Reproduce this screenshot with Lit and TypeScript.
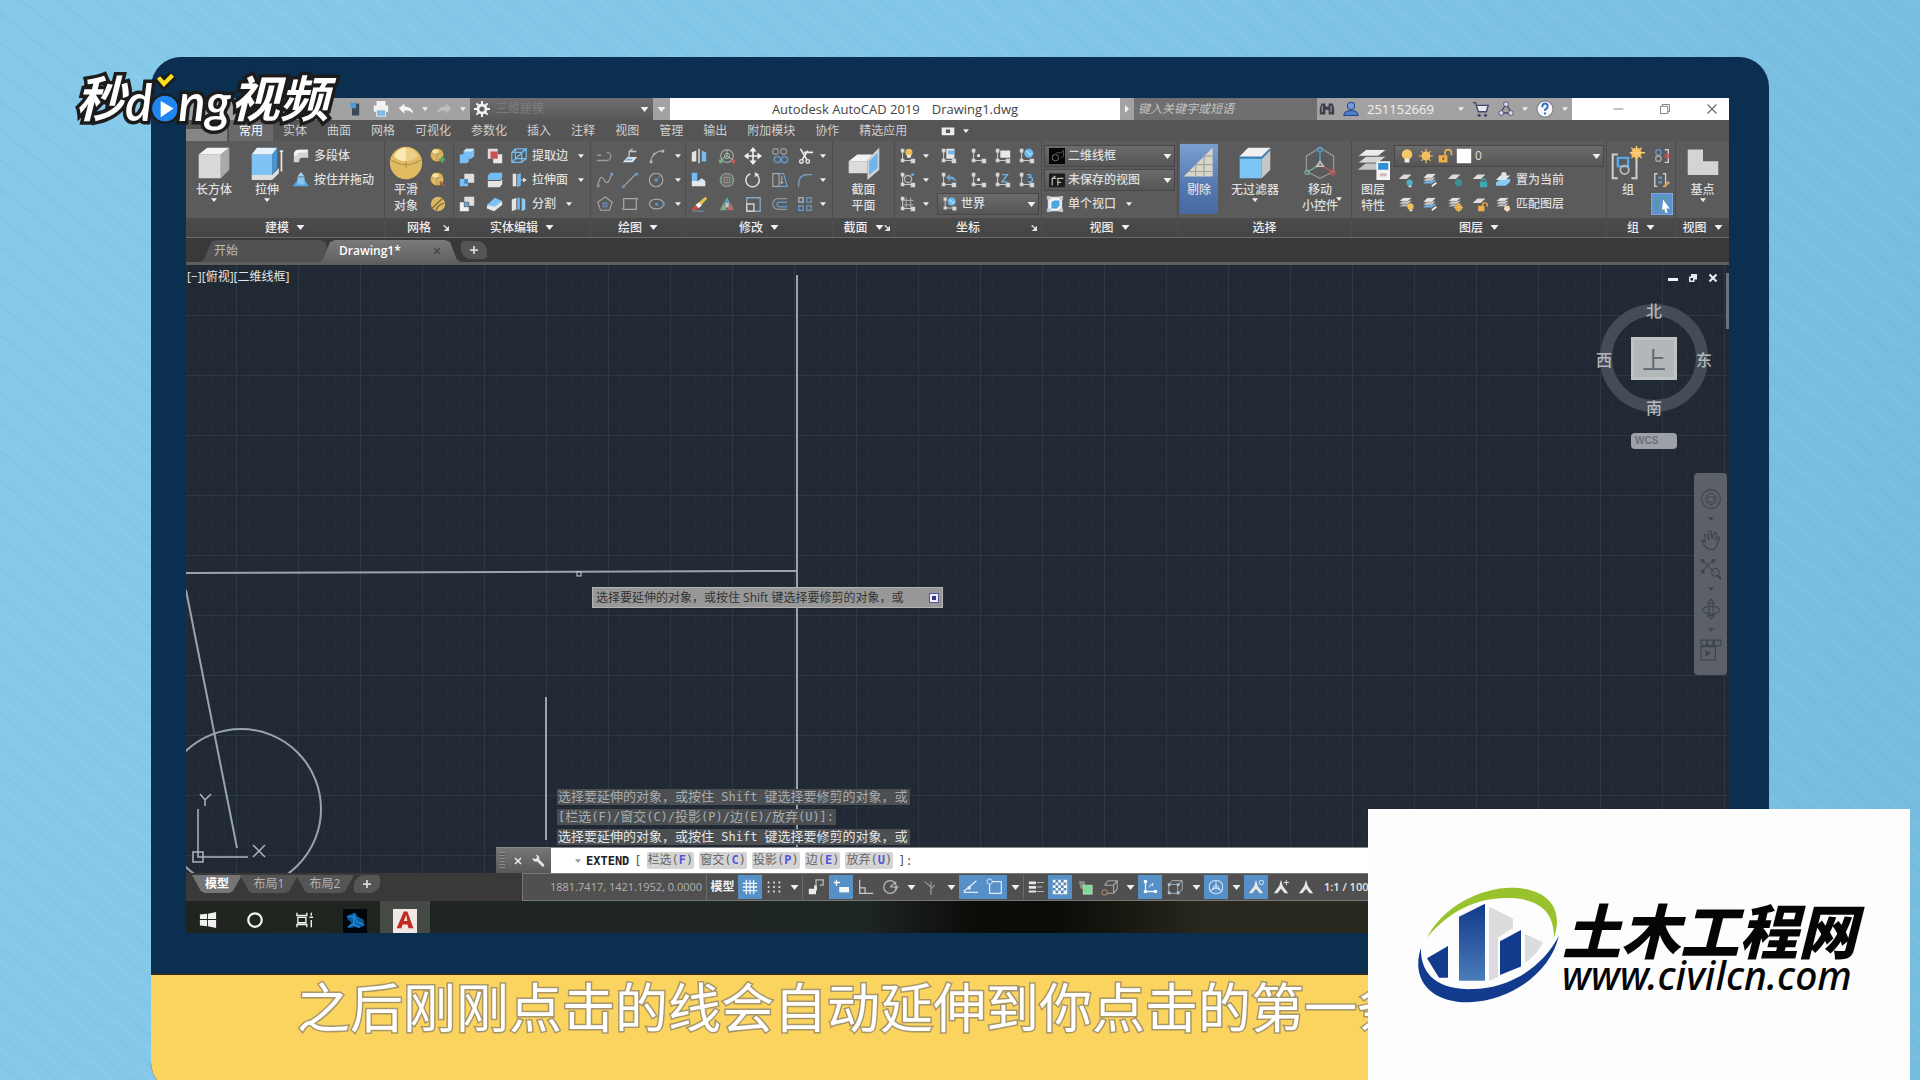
import { LitElement, html, css, svg, nothing, TemplateResult } from "lit";
import { customElement } from "lit/decorators.js";

/* ---------- icon artwork, each drawn on a 20 x 20 grid ---------- */
const axes = svg`<path d="M4 4v11h11" fill="none" stroke="#c9c9c9" stroke-width="1.2"/><path d="M2 2h4v4H2zM2 13h4v4H2zM13 13h5v5h-5z" fill="#d6d6d6"/>`;
const axesW = svg`<path d="M5 5v10h10" fill="none" stroke="#e6f0fa" stroke-width="1.4"/><circle cx="5" cy="4" r="2" fill="#fff"/><circle cx="5" cy="15" r="2" fill="#fff"/><circle cx="16" cy="15" r="2" fill="#fff"/>`;
const layer = svg`<path d="M2 9l5-5h9l-5 5z" fill="#dcdcdc"/>`;
const layers = svg`<path d="M2 13l5-4h10l-5 4z" fill="#bdbdbd" stroke="#4a4a4a" stroke-width=".5"/><path d="M2 10l5-4h10l-5 4z" fill="#cfcfcf" stroke="#4a4a4a" stroke-width=".5"/><path d="M2 7l5-4h10l-5 4z" fill="#e8e8e8" stroke="#4a4a4a" stroke-width=".5"/>`;
const layersBlue = svg`<path d="M2 14l5-4h10l-5 4z" fill="#6fb6ee"/><path d="M2 11l5-4h10l-5 4z" fill="#cfcfcf" stroke="#4a4a4a" stroke-width=".5"/><path d="M2 8l5-5h10l-5 5z" fill="#e8e8e8" stroke="#4a4a4a" stroke-width=".5"/>`;
const ball = svg`<circle cx="9" cy="9" r="7.500" fill="#dcb765" stroke="#6e5a2c" stroke-width=".8"/><path d="M3 6q6 4 12 0M9 2v14" fill="none" stroke="#a4874a" stroke-width=".7"/><ellipse cx="7" cy="5" rx="3.500" ry="2.500" fill="#f5e0a5"/>`;
const man = svg`<path d="M10 2l2 7 6 8h-4l-4-5-4 5H2l6-8z" fill="#e6e6e6"/>`;

const ART: Record<string, TemplateResult> = {
  box: svg`<path d="M1 5h13v14H1z" fill="#d9d9d9"/><path d="M1 5l5-4h13l-5 4z" fill="#f4f4f4"/><path d="M14 5l5-4v13l-5 5z" fill="#a9a9a9"/>`,
  extrude: svg`<path d="M1 17h12v3H1zM13 17l4-4v3l-4 4z" fill="#dedede"/><path d="M1 5h12v12H1z" fill="#7fc3f5"/><path d="M1 5l3-4h12l-3 4z" fill="#e3f2fd"/><path d="M13 5l3-4v12l-3 4z" fill="#4795d3"/><path d="M18.500 3v12M17.500 3h2" stroke="#e5e5e5"/>`,
  polysolid: svg`<path d="M2 9q0-6 6-6h10v9h-7q-3 0-3 4v1H2z" fill="#d2d2d2"/><path d="M2 9q0-6 6-6h10l-3 3H9q-4 0-4 4z" fill="#f5f5f5"/>`,
  press: svg`<path d="M1 17l4-6h10l4 6z" fill="#5aa3dc"/><path d="M6 7h8v8H6z" fill="#86c6f3"/><path d="M10 1l4 5H6z" fill="#9ed2f7"/>`,
  sphere: svg`<circle cx="10" cy="10" r="9.500" fill="#e0bb62"/><path d="M1 8q9 6 18 0M10 1v12" fill="none" stroke="#a68a48" stroke-width=".6"/><path d="M3 6Q5 1 10 1v8Q5 9 3 6z" fill="#f8e8b4"/><path d="M10 1q5 0 7 5-2 3-7 3z" fill="#eccf86"/>`,
  ballPlus: svg`${ball}<path d="M11 14h7M14.500 10.500v7" stroke="#55a867" stroke-width="2.500"/>`,
  ballMinus: svg`${ball}<path d="M12 12l5 5" stroke="#a85b4a" stroke-width="2.500"/>`,
  ballLine: svg`<circle cx="10" cy="10" r="8" fill="#d9b766"/><path d="M3 15L15 4M8 17q1-6 9-8" fill="none" stroke="#7c6834" stroke-width="1.500"/>`,
  union: svg`<path d="M2 8h4V5l3-3h9v8l-3 3h-3v3l-2 2H2z" fill="#79bff3"/><path d="M6 5l3-3h9l-3 3z" fill="#cfe8fb"/>`,
  subtract: svg`<path d="M2 2h11v11H2z" fill="#e4dada"/><path d="M8 8h10v10H8z" fill="#efe6e6"/><path d="M5 5h8v8H5z" fill="#c65252"/>`,
  wire: svg`<path d="M2 6h11v11H2zM2 6l4-4h12l-5 4M18 2v11l-5 4M2 17L18 2M6 2v11h12" fill="none" stroke="#73bdf3" stroke-width="1.300"/>`,
  interfere: svg`<path d="M7 3h10l1 1v9H7z" fill="#dedede"/><path d="M2 9h9v8H2z" fill="#79bff3"/><path d="M7 9h4v5H7z" fill="#4287c3"/>`,
  slab: svg`<path d="M2 5l3-3h13v5l-2 3H2z" fill="#74bbf0"/><path d="M2 11h14l2-2v6l-3 3H2z" fill="#e6e6e6"/>`,
  face: svg`<path d="M3 3h4v14H3z" fill="#e1e1e1"/><path d="M8 4l4-2v14l-4 2z" fill="#6fb8ef"/><path d="M12 10h5M15 8l3 2-3 2z" stroke="#ddd" fill="#ddd"/>`,
  intersect: svg`<path d="M7 2h11v10H7z" fill="#dedede"/><path d="M2 8h10v10H2z" fill="#efefef"/><path d="M7 8h5v5H7z" fill="#5fa9e3" stroke="#333" stroke-width=".6"/>`,
  fillet3: svg`<path d="M1 12l9-8 8 3v4l-9 7-8-3z" fill="#e7e7e7"/><path d="M1 11l9-8 8 4-8 6z" fill="#7dc0f2"/>`,
  split: svg`<path d="M2 5l5-2v13l-5 2z" fill="#e3e3e3"/><path d="M8 3h3v13H8z" fill="#6fb8ef"/><path d="M13 3l4 2v11l-4 2z" fill="#8ccaf6"/>`,
  pline: svg`<path d="M1 15h11a4 4 0 0 0 0-9M1 9h5" fill="none" stroke="#9a9fa6" stroke-width="1.400"/>`,
  plane: svg`<path d="M2 17l5-6h11l-5 6z" fill="#e0e6ea"/><path d="M9 13V5h8M9 5l4-3" stroke="#bfc7ce" fill="none" stroke-width="1.400"/><path d="M6 13h7l-1 2H5z" fill="#6ba9d9"/>`,
  arc: svg`<path d="M3 17Q4 5 17 4" fill="none" stroke="#a9a9a9" stroke-width="1.200"/><path d="M2 15h3v3H2zM6 7h2v2H6zM15 3h3v3h-3z" fill="#aeb8c4"/>`,
  spline: svg`<path d="M2 16Q5 2 9 10T17 4" fill="none" stroke="#9fa6ae" stroke-width="1.300"/><path d="M1 15h3v3H1zM16 2h3v3h-3z" fill="#7f9dbd"/>`,
  line: svg`<path d="M3 17L17 3" stroke="#a8adb3" stroke-width="1.200"/><path d="M1 16h3v3H1zM16 2h3v3h-3z" fill="#6d99c4"/>`,
  circle: svg`<circle cx="9" cy="10" r="7.500" fill="none" stroke="#a9a9a9" stroke-width="1.300"/><path d="M9 10l6-6" stroke="#6d99c4"/><circle cx="9" cy="10" r="2" fill="#5f94c8"/>`,
  polygon: svg`<path d="M10 2l8 6-3 9H5L2 8z" fill="none" stroke="#a9a9a9" stroke-width="1.200"/><path d="M8 9h4v4H8z" fill="none" stroke="#6d99c4" stroke-width="1.200"/>`,
  rect: svg`<path d="M3 4h14v12H3z" fill="none" stroke="#a9a9a9" stroke-width="1.300"/><path d="M1 14h3v3H1zM16 3h3v3h-3z" fill="#7c97b4"/>`,
  ellipse: svg`<ellipse cx="9.500" cy="10" rx="8" ry="5.500" fill="none" stroke="#a9a9a9" stroke-width="1.300"/><path d="M8 9h3v3H8zM16 9h3v3h-3z" fill="#5f94c8"/>`,
  mirror: svg`<path d="M2 6l5-2v12H2z" fill="#e3e3e3"/><path d="M10 2v16" stroke="#e8e8e8" stroke-width="1.500"/><path d="M13 4l5 2v10h-5z" fill="#74bbf0"/>`,
  gizmoRot: svg`<circle cx="10" cy="10" r="7" fill="none" stroke="#98a39b" stroke-width="1.500"/><path d="M10 4v6l-6 4M10 10l6 4" stroke="#8ec6a4" fill="none" stroke-width="1.200"/><path d="M1 14h4v4H1z" fill="#6fae87"/><path d="M15 14h4v4h-4z" fill="#b3605c"/><circle cx="10" cy="10" r="3" fill="none" stroke="#b2b2b2"/>`,
  move: svg`<path d="M10 0l4 5H6zM10 20l4-5H6zM0 10l5-4v8zM20 10l-5-4v8z" fill="#f0f0f0"/><path d="M10 4v12M4 10h12" stroke="#f0f0f0" stroke-width="1.800"/>`,
  copy: svg`<circle cx="5" cy="5" r="3.200" fill="none" stroke="#9f9f9f" stroke-width="1.200"/><circle cx="14" cy="5" r="3.200" fill="none" stroke="#9f9f9f" stroke-width="1.200"/><circle cx="7" cy="14" r="3.500" fill="none" stroke="#5f94c8" stroke-width="1.700"/><circle cx="15" cy="14" r="3.500" fill="none" stroke="#5f94c8" stroke-width="1.700"/>`,
  trim: svg`<path d="M5 2l7 12M13 4L7 14M9 6h10" stroke="#ececec" stroke-width="1.800" fill="none"/><circle cx="6" cy="16" r="2" fill="none" stroke="#ececec" stroke-width="1.500"/><circle cx="13" cy="16" r="2" fill="none" stroke="#ececec" stroke-width="1.500"/>`,
  align: svg`<path d="M2 2h6v9H2z" fill="#74bbf0"/><path d="M2 11h15v6H2z" fill="#e8e8e8"/><path d="M6 13l7-5 4 3z" fill="#cfe6f8"/>`,
  rot3: svg`<circle cx="10" cy="10" r="7.500" fill="none" stroke="#8d9c94" stroke-width="1.300"/><ellipse cx="10" cy="10" rx="3" ry="7.500" fill="none" stroke="#b67f74"/><ellipse cx="10" cy="10" rx="7.500" ry="3" fill="none" stroke="#7aa988"/><path d="M10 2v16M2 10h16" stroke="#9a9a9a" stroke-width=".7"/>`,
  rotate: svg`<path d="M14 4a7.500 7.500 0 1 1-7-1" fill="none" stroke="#dcdcdc" stroke-width="1.700"/><path d="M12 1l5 3-5 3z" fill="#dcdcdc"/>`,
  stretch: svg`<path d="M2 3h7v14H2z" fill="none" stroke="#a9a9a9" stroke-width="1.300"/><path d="M9 3h5l4 14h-9" fill="none" stroke="#6da1d0" stroke-width="1.300"/><path d="M12 6v8l-2-2M12 14l2-2" stroke="#c9c9c9" fill="none"/>`,
  fillet: svg`<path d="M3 18v-4Q3 4 13 4h5" fill="none" stroke="#8e9aa6" stroke-width="1.400"/><path d="M3 14Q3 4 13 4" fill="none" stroke="#6b98c4" stroke-width="1.400"/>`,
  erase: svg`<path d="M9 9l8-7 2 2-7 8z" fill="#e8c24e"/><path d="M6 11l4-3 3 4-4 3z" fill="#f4f4f4"/><path d="M1 17l5-6 4 4-5 2z" fill="#c2513f"/><path d="M3 18h12" stroke="#7a9fc2"/>`,
  scale3: svg`<path d="M10 2l4 8H6z" fill="#5c9fb5"/><path d="M6 9l-4 8h8z" fill="#7fa98b"/><path d="M14 9l4 8h-8z" fill="#b76d66"/><path d="M8 9h4v5H8z" fill="#c3c3c3"/>`,
  scale: svg`<path d="M3 3h15v15H3z" fill="none" stroke="#8aa5bf" stroke-width="1.500"/><path d="M3 10h8v8H3z" fill="none" stroke="#d0d0d0" stroke-width="1.600"/>`,
  offset: svg`<path d="M18 4H8a6 6 0 0 0 0 12h10" fill="none" stroke="#8b97a3" stroke-width="1.400"/><path d="M18 8H9a2.500 2.500 0 0 0 0 5h9" fill="none" stroke="#5f94c8" stroke-width="1.500"/>`,
  array: svg`<path d="M3 3h5v5H3zM12 3h5v5h-5zM3 12h5v5H3zM12 12h5v5h-5z" fill="none" stroke="#6b98c4" stroke-width="1.400"/><path d="M3 3h5v5H3z" fill="none" stroke="#a9a9a9" stroke-width="1.400"/>`,
  section: svg`<path d="M1 9h11v7H1z" fill="#dcdcdc"/><path d="M1 9l5-4h9l-3 4z" fill="#f2f2f2"/><path d="M12 8l7-7v13l-7 6z" fill="#cfd3d6"/><path d="M13 9l5-5v9l-5 4z" fill="#6cb5ee"/>`,
  ucsBulb: svg`${axes}<circle cx="11" cy="6" r="4" fill="#efbd5e"/><path d="M9 9h4v3H9z" fill="#f4f4f4"/>`,
  ucsGear: svg`${axes}<circle cx="10" cy="9" r="4" fill="none" stroke="#b5b5b5" stroke-width="1.500"/><circle cx="15" cy="4" r="1.500" fill="#6fb8ef"/>`,
  ucsHash: svg`${axes}<path d="M8 3v11M13 3v11M5 6h11M5 11h11" stroke="#b5b5b5"/>`,
  ucsDoc: svg`${axes}<path d="M7 2h9v11H7z" fill="#e6e6e6"/><path d="M9 4h7v4H9z" fill="#6cb5ee"/>`,
  ucsDot: svg`${axes}<path d="M8 8h3v3H8z" fill="#ededed"/>`,
  ucsView: svg`${axes}<path d="M7 4h11v8H7z" fill="#e8e8e8"/>`,
  ucsGlobe: svg`${axes}<circle cx="12" cy="7" r="5" fill="#6cb8f0"/><path d="M9 5l3 1 1 3 3-2" stroke="#d9effc" fill="none"/>`,
  ucsBack: svg`${axes}<path d="M7 7l4-4v3q6 0 7 6-3-3-7-3v3z" fill="#65a8dd"/>`,
  ucsZ: svg`${axes}<path d="M9 4h6l-6 8h6" fill="none" stroke="#6cb5ee" stroke-width="1.500"/>`,
  ucs3: svg`${axes}<path d="M10 4h4v3h-3 3q2 0 2 3t-5 2" fill="none" stroke="#6cb5ee" stroke-width="1.500"/>`,
  visWire: svg`<path d="M0 0h20v20H0z" fill="#060606"/><circle cx="8" cy="12" r="4" fill="none" stroke="#8c8c8c"/><path d="M9 6h6l3-3v7l-3 3" fill="none" stroke="#6a6a6a"/>`,
  viewF: svg`<path d="M0 2h20v17H0z" fill="#1b1b1b"/><path d="M4 17V8h5M11 17v-4h4M11 13V8h7M4 8l4-3" fill="none" stroke="#bdbdbd" stroke-width="1.500"/>`,
  viewport: svg`<path d="M3 3h14v14H3z" fill="#f2f2f2" stroke="#d8e6f0" stroke-width="2"/><path d="M1 1h4v4H1zM15 1h4v4h-4zM1 15h4v4H1zM15 15h4v4h-4z" fill="#c5c5c5"/><path d="M6 8l3-2h6v6l-3 3H6z" fill="#4aa8df"/>`,
  cull: svg`<path d="M1 18L18 1v17z" fill="#d9d5ca"/><path d="M4 15h14M8 11h10M13 6h5M8 11v7M13 6v12" stroke="#a6a294" stroke-width=".7"/>`,
  filter: svg`<path d="M1 6h13v13H1z" fill="#7dc5f7"/><path d="M1 6l5-5h13l-5 5z" fill="#f0f0f0"/><path d="M14 6l5-5v13l-5 5z" fill="#c6c6c6"/><path d="M1 7h13l5-5" fill="none" stroke="#3c7fb4"/>`,
  gizmo: svg`<path d="M10 1l8 5v9l-8 4-8-4V6z" fill="none" stroke="#9a9a9a" stroke-width=".7"/><path d="M10 3v8" stroke="#4e9fd0" stroke-width=".8"/><path d="M10 11l-7 4" stroke="#69b490" stroke-width=".8"/><path d="M10 11l7 4" stroke="#c05a54" stroke-width=".8"/><circle cx="10" cy="2" r="1.300" fill="none" stroke="#4e9fd0" stroke-width=".8"/><circle cx="2.500" cy="15.500" r="1.300" fill="none" stroke="#69b490" stroke-width=".8"/><circle cx="17.500" cy="15.500" r="1.300" fill="none" stroke="#c05a54" stroke-width=".8"/><path d="M8 12l2-3 2 3z" fill="none" stroke="#c9c9c9" stroke-width=".8"/>`,
  layerProps: svg`<path d="M1 14l5-4h12l-5 4z" fill="#c4c4c4"/><path d="M1 10l5-4h12l-5 4z" fill="#d6d6d6" stroke="#555" stroke-width=".5"/><path d="M1 6l5-4h12l-5 4z" fill="#ececec" stroke="#555" stroke-width=".5"/><path d="M12 9h8v11h-8z" fill="#f4f4f4"/><path d="M13 10h6v4h-6z" fill="#2f8fd6"/><path d="M14 16h4v2h-4z" fill="#d8b9b9"/>`,
  bulb: svg`<circle cx="10" cy="8" r="6.500" fill="#f7c867"/><path d="M7 13h6v5H7z" fill="#eee"/>`,
  sun: svg`<circle cx="10" cy="10" r="5.500" fill="#f7c867"/><path d="M10 1v18M1 10h18M4 4l12 12M16 4L4 16" stroke="#f0b955" stroke-width="1.500"/>`,
  unlock: svg`<path d="M2 9h11v9H2z" fill="#eeb04e"/><path d="M10 9V6q0-4 4-4t4 4v3" fill="none" stroke="#eeb04e" stroke-width="2"/><path d="M7 12h2v3H7z" fill="#7a5620"/>`,
  swatch: svg`<path d="M1 1h18v18H1z" fill="#fff"/>`,
  lyBulb: svg`${layer}<circle cx="14" cy="13" r="3.500" fill="#4cb3c4"/><path d="M13 16h3v2h-3z" fill="#e6e6e6"/>`,
  lyBlue: svg`${layersBlue}<path d="M12 17l5-4" stroke="#f0f0f0" stroke-width="2"/>`,
  lyFreeze: svg`${layer}<circle cx="14" cy="13" r="4" fill="#3d8f92"/>`,
  lyLock: svg`${layer}<path d="M10 12h8v6h-8z" fill="#3cabb6"/><path d="M12 12v-2q2-3 4 0v2" fill="none" stroke="#3cabb6" stroke-width="1.500"/>`,
  lyCur: svg`<path d="M2 16l5-4h11l-5 4z" fill="#6db9ef"/><path d="M2 13l5-4h11v3l-5 4H2z" fill="#8cc9f4"/><path d="M2 10l5-5h11l-5 5z" fill="#d9e7f0"/><circle cx="11" cy="4" r="3" fill="#e2e2e2"/>`,
  lyOn: svg`${layers}<circle cx="15" cy="13" r="3.500" fill="#f5bf58"/><path d="M14 16h3v2h-3z" fill="#e6e6e6"/>`,
  lySun: svg`${layers}<circle cx="14" cy="14" r="4" fill="#dba94b"/><path d="M14 9v10M9 14h10" stroke="#f3c063"/>`,
  lyUnlock: svg`${layer}<path d="M8 12h7v6H8z" fill="#eeb04e"/><path d="M13 12v-2q2-3 5 0v3" fill="none" stroke="#eeb04e" stroke-width="1.500"/>`,
  lyMatch: svg`${layers}<path d="M12 12h5l1 4-3 3-4-3z" fill="#f0dfb5"/>`,
  group: svg`<path d="M4 5H1v14h3M12 19h3V5h-3" fill="none" stroke="#cfcfcf" stroke-width="1.200"/><path d="M4 7h6v5H4z" fill="none" stroke="#5aa7e4" stroke-width="1.400"/><circle cx="8" cy="14" r="2.500" fill="none" stroke="#bbb"/><circle cx="15" cy="4" r="3" fill="#f4b94f"/><path d="M15 0v9M11 4h9M12 1l6 6M18 1l-6 6" stroke="#f7cc78" stroke-width=".8"/>`,
  ungroup: svg`<path d="M13 3h4v14h-4" fill="none" stroke="#cfcfcf" stroke-width="1.500"/><circle cx="6" cy="6" r="3" fill="none" stroke="#5f94c8" stroke-width="1.500"/><circle cx="6" cy="13" r="3" fill="none" stroke="#a9a9a9" stroke-width="1.500"/><path d="M13 8l5 4M18 8l-5 4" stroke="#d34e4e" stroke-width="1.700"/>`,
  groupEdit: svg`<path d="M5 3H2v14h3M11 17h3V3h-3" fill="none" stroke="#cfcfcf" stroke-width="1.500"/><path d="M6 6h4v3H6zM6 11h4v3H6z" fill="#5f94c8"/><path d="M11 17l6-6 2 2-6 5z" fill="#e09e5a"/>`,
  groupSel: svg`<path d="M0 0h20v20H0z" fill="#5f92cf" stroke="#93b5df"/><path d="M5 4v12M9 4h3v12H9" stroke="#52a08a" stroke-width="2" fill="none"/><path d="M11 6l6 8h-3l1 4-2 0-1-4-2 2z" fill="#fff"/>`,
  base: svg`<path d="M1 2h9v7h9v8H1z" fill="#d4d4d4"/>`,
  phone: svg`<path d="M5 3h9v15H5z" fill="#3f4a55"/><path d="M3 2h7v7H3z" fill="#4d9bd3"/>`,
  folder: svg`<path d="M2 12h6v5H2z" fill="#e9a945"/>`,
  printer: svg`<path d="M5 1h10v5H5zM2 6h16v7H2z" fill="#f3f3f3"/><path d="M5 11h10v7H5z" fill="#7dbce8" stroke="#eee"/>`,
  undo: svg`<path d="M1 9l7-6v4q10 0 11 9-4-5-11-4v4z" fill="#f5f5f5"/>`,
  redo: svg`<path d="M19 9l-7-6v4Q2 7 1 16q4-5 11-4v4z" fill="#bdbdbd"/>`,
  gear: svg`<circle cx="10" cy="10" r="5" fill="none" stroke="#f2f2f2" stroke-width="3.500"/><path d="M10 0v4M10 16v4M0 10h4M16 10h4M3 3l3 3M14 14l3 3M17 3l-3 3M3 17l3-3" stroke="#f2f2f2" stroke-width="2.500"/>`,
  binoc: svg`<path d="M3 3h5v14H1V9zM12 3h5l2 6v8h-7zM8 7h4v4H8z" fill="#3a3f47"/><path d="M4 6v8M15 6v8" stroke="#c7c7c7"/>`,
  user: svg`<circle cx="10" cy="6" r="4.500" fill="#6f9cdc" stroke="#27468d" stroke-width="1.300"/><path d="M1 18q1-6 9-6t9 6z" fill="#4f7fc9" stroke="#27468d" stroke-width="1.300"/>`,
  cart: svg`<path d="M1 3h3l3 10h9l2-7H6" fill="#e8e8ee" stroke="#44496b" stroke-width="1.600"/><circle cx="8" cy="17" r="1.800" fill="#44496b"/><circle cx="15" cy="17" r="1.800" fill="#44496b"/>`,
  share: svg`<path d="M10 4l7 11H3z" fill="none" stroke="#44496b" stroke-width="1.700"/><circle cx="10" cy="4" r="3" fill="#d5d9e8" stroke="#44496b"/><circle cx="4" cy="15" r="3" fill="#d5d9e8" stroke="#44496b"/><circle cx="16" cy="15" r="3" fill="#d5d9e8" stroke="#44496b"/>`,
  help: svg`<circle cx="10" cy="10" r="9" fill="#f7f7f7" stroke="#7f8893" stroke-width="1.500"/><path d="M7 8q0-4 3-4t3 3q0 2-3 4v1M10 14v2" fill="none" stroke="#3371c0" stroke-width="2.200"/>`,
  winMin: svg`<path d="M5 10h11" stroke="#777"/>`,
  winMax: svg`<path d="M5 7h8v8H5z" fill="none" stroke="#777"/><path d="M7 7V5h8v8h-2" fill="none" stroke="#777"/>`,
  winX: svg`<path d="M5 5l10 10M15 5L5 15" stroke="#666" stroke-width="1.200"/>`,
  cam: svg`<path d="M1 5h18v11H1z" fill="#ececec"/><path d="M7 8h6v5H7z" fill="#555"/>`,
  grid: svg`<path d="M6 2v16M10 2v16M14 2v16M2 6h16M2 10h16M2 14h16" stroke="#f2f7fc" stroke-width="1.400"/>`,
  dots: svg`<path d="M3 4h2v2H3zM9 4h2v2H9zM15 4h2v2h-2zM3 9h2v2H3zM9 9h2v2H9zM15 9h2v2h-2zM3 14h2v2H3zM9 14h2v2H9zM15 14h2v2h-2z" fill="#d6d6d6"/>`,
  snap: svg`<path d="M2 12h8v6H2zM8 8h3v6H8z" fill="#ececec"/><path d="M10 8V2h8v6h-4" fill="none" stroke="#b9b9b9" stroke-width="1.400"/>`,
  dyn: svg`<path d="M5 2v7M2 5h7" stroke="#fff" stroke-width="1.400"/><path d="M8 10h11v6H8z" fill="#f6f6f6"/>`,
  ortho: svg`<path d="M3 2v15h15M3 11h6v6" fill="none" stroke="#c9c9c9" stroke-width="1.400"/>`,
  polar: svg`<circle cx="9" cy="10" r="7" fill="none" stroke="#b9b9b9" stroke-width="1.400"/><path d="M9 10h10M9 10l7-6M14 10l3 3" stroke="#b9b9b9" fill="none" stroke-width="1.300"/>`,
  iso: svg`<path d="M10 8v11M10 10L3 4M10 12l4-4" stroke="#9b9b9b" stroke-width="1.300"/><path d="M9 4h2v4H9z" fill="#71875e"/>`,
  track: svg`<path d="M2 15L16 3M2 16h16" stroke="#dceafa" stroke-width="1.500" fill="none"/><circle cx="8" cy="11" r="2" fill="#dceafa"/>`,
  osnap: svg`<path d="M4 4h13v13H4z" fill="none" stroke="#dceafa" stroke-width="1.300"/><circle cx="4" cy="4" r="3" fill="#5b93c8" stroke="#dceafa"/>`,
  lw: svg`<path d="M2 4h8v3H2zM2 9h8v3H2zM2 14h8v2H2z" fill="#e6e6e6"/><path d="M11 5h8M11 10h6M11 15h8" stroke="#bdbdbd"/>`,
  trans: svg`<path d="M2 2h16v16H2z" fill="#f3f8fc"/><path d="M5 2h3v3H5zM11 2h3v3h-3zM2 5h3v3H2zM8 5h3v3H8zM14 5h3v3h-3zM5 8h3v3H5zM11 8h3v3h-3zM2 11h3v3H2zM8 11h3v3H8zM14 11h3v3h-3zM5 14h3v3H5zM11 14h3v3h-3z" fill="#5786b3"/>`,
  cycle: svg`<path d="M3 3l7 1v8H5z" fill="#83917f"/><path d="M8 8h10v10H8z" fill="#7fd897" stroke="#e8f7ea" stroke-width=".6"/>`,
  osnap3: svg`<path d="M4 8h10v9H4M4 8l4-5h10l-4 5M18 3v9l-4 5" fill="none" stroke="#a9a9a9" stroke-width="1.200"/><circle cx="4" cy="16" r="3" fill="#4d4d4d" stroke="#c79d74"/>`,
  ducs: svg`${axesW}<path d="M9 10l4-4M13 6v3" stroke="#fff" fill="none"/>`,
  selfil: svg`<path d="M3 7h10v10H3zM3 7l4-4h11l-5 4M18 3v10l-5 4" fill="none" stroke="#b9b9b9"/><path d="M2 6h3v3H2zM12 6h3v3h-3zM2 15h3v3H2zM12 15h3v3h-3z" fill="#a8cbe3"/>`,
  gizS: svg`<circle cx="10" cy="10" r="7.500" fill="none" stroke="#cfe0f2" stroke-width="1.200"/><path d="M10 2v8l-7 5M10 10l7 5M6 12q4-8 8 0z" fill="none" stroke="#dceafa"/>`,
  annoA: svg`${man}<circle cx="16" cy="5" r="2.500" fill="none" stroke="#e6f0fa"/>`,
  annoB: svg`${man}<path d="M16 2v6M13 5h6" stroke="#e6e6e6"/>`,
  annoC: svg`${man}`,
  wrench: svg`<path d="M17 16L9 8" stroke="#e6e6e6" stroke-width="4" stroke-linecap="round"/><path d="M2 6a5 5 0 0 0 9 3 5 5 0 0 0-4-8l2 4-2 2z" fill="#e6e6e6"/>`,
  x: svg`<path d="M4 4l12 12M16 4L4 16" stroke="#ededed" stroke-width="3"/>`,
  xs: svg`<path d="M3 3l14 14M17 3L3 17" stroke="#3c3c3c" stroke-width="3"/>`,
  plus: svg`<path d="M10 2v16M2 10h16" stroke="#d8d8d8" stroke-width="3.500"/>`,
  dMin: svg`<path d="M0 10h20v6H0z" fill="#eef2f5"/>`,
  dMax: svg`<path d="M2 7h11v11H2zM6 2h12v11h-5V7H6z" fill="#e6eaee"/><path d="M5 10h5v5H5z" fill="#222b33"/>`,
  dX: svg`<path d="M3 3l14 14M17 3L3 17" stroke="#eef2f5" stroke-width="4"/>`,
  wheel: svg`<circle cx="10" cy="10" r="8.500" fill="none" stroke="#3d444d"/><circle cx="10" cy="10" r="5" fill="none" stroke="#3d444d" stroke-width=".8"/><path d="M7 8h6v5H7z" fill="none" stroke="#3d444d" stroke-width=".8"/>`,
  hand: svg`<path d="M7 18q-5-4-5-8l3 2-1-7 2 0 2 5V2h2l1 7 2-6 2 1-1 6 3-3 1 1-3 7q-1 3-3 4z" fill="none" stroke="#3d444d"/>`,
  zoomx: svg`<path d="M2 2l11 11M12 2L2 12" stroke="#3d444d"/><path d="M1 1h3v3H1zM11 1h3v3h-3zM1 11h3v3H1z" fill="#3d444d"/><circle cx="14" cy="13" r="3.500" fill="none" stroke="#3d444d"/><path d="M16 16l3 3" stroke="#3d444d" stroke-width="2"/>`,
  orbit: svg`<ellipse cx="10" cy="11" rx="8" ry="3.500" fill="none" stroke="#3d444d"/><path d="M8 5h4v11H8zM10 1l3 4H7zM10 19l3-3H7z" fill="none" stroke="#3d444d"/>`,
  motion: svg`<path d="M1 1h5v5H1zM7 1h5v5H7zM13 1h6v5h-6zM1 7h13v12H1z" fill="none" stroke="#3d444d"/><path d="M5 10l5 3-5 3z" fill="#3d444d"/>`,
  win: svg`<path d="M1 4l8-1v6H1zM10 3l9-2v8h-9zM1 10h8v7l-8-1zM10 10h9v9l-9-2z" fill="#f1f1f1"/>`,
  ring: svg`<circle cx="10" cy="10" r="7.500" fill="none" stroke="#f1f1f1" stroke-width="2.500"/>`,
  task: svg`<path d="M1 2v3h11V2M1 18v-3h11v3M2 7h9v6H2z" fill="none" stroke="#f1f1f1" stroke-width="1.500"/><path d="M17 2v3M17 10v8M15 7h4" stroke="#f1f1f1" stroke-width="1.600"/>`,
  bird: svg`<path d="M0 0h20v20H0z" fill="#020509"/><path d="M3 6l7-3 2 3 5 3 1 5-5 2-3-1-6 1 3-5-3-2z" fill="#0c5c9c"/><path d="M4 6l6 1 2 4 5 2M4 15l6-3M9 4v9l5 2" stroke="#1b8ee0" fill="none"/>`,
  acad: svg`<path d="M0 0h20v20H0z" fill="#f1e7e4"/><path d="M3 16L9 2h3l5 14h-4l-1-3H8l-1 3zM9 10h3l-1-5z" fill="#c32b22" fill-rule="evenodd"/>`,
};

const icon = (name: string, cls = "i20") =>
  html`<svg class=${cls} viewBox="0 0 20 20" aria-hidden="true">${ART[name]}</svg>`;
const caret = (cls = "") =>
  html`<svg class="caret ${cls}" viewBox="0 0 8 5" aria-hidden="true"><path d="M0 0h8L4 5z" fill="currentColor" /></svg>`;
const ib = (name: string, label: string, cls = "") =>
  html`<button class="ib ${cls}" aria-label=${label}>${icon(name, "i18")}</button>`;
const more = (label: string) => html`<button class="ib" aria-label=${label}>${caret("s")}</button>`;
const row = (name: string, label: string, drop = false) =>
  html`<button class="rowb">${icon(name, "i18")}<span>${label}</span>${drop ? caret("s") : nothing}</button>`;
const big = (name: string, lines: string[], drop = false, cls = "") =>
  html`<button class="big ${cls}">${icon(name, "i34")}${lines.map((l) => html`<span>${l}</span>`)}${drop ? caret("s") : nothing}</button>`;
const combo = (name: string, label: string, value: string) =>
  html`<label class="combo">${name ? icon(name, "i16") : nothing}<select aria-label=${label}><option>${value}</option></select>${caret()}</label>`;
const panel = (cls: string, title: string, body: unknown, drop = true, corner = false) =>
  html`<section class="panel">
    <div class="body ${cls}">${body}</div>
    <h2 class="ptitle"><span>${title}</span>${drop ? caret() : nothing}${corner
      ? html`<svg class="corner" viewBox="0 0 8 8" aria-hidden="true"><path d="M8 1v7H1zM0 1l2-1 4 4-1 1z" fill="#e2e2e2" /></svg>`
      : nothing}</h2>
  </section>`;

@customElement("app-root")
export class AppRoot extends LitElement {
  static styles = css`
    :host {
      display: block;
      font-family: "Open Sans", "Noto Sans CJK SC", sans-serif;
      font-size: 12px;
      line-height: 16px;
      color: #dedede;
    }
    * { box-sizing: border-box; }
    button, select, input {
      font: inherit;
      color: inherit;
      background: none;
      border: 0;
      padding: 0;
      margin: 0;
      min-width: 0;
      border-radius: 0;
    }
    svg { display: block; flex: none; }
    .stage {
      position: relative;
      display: flex;
      height: 100vh;
      padding: 57px 151px 0;
      overflow: hidden;
      background:
        repeating-linear-gradient(38deg, #ffffff0a 0 3px, #ffffff00 3px 11px, #2a7db30a 11px 14px, #ffffff00 14px 23px),
        linear-gradient(100deg, #86c9e9, #81c6e8 50%, #76bcdf);
    }
    .card {
      flex: 1;
      min-width: 0;
      display: flex;
      flex-direction: column;
      margin-bottom: -12px;
      border-radius: 30px;
      overflow: hidden;
      background: #0a2f51;
    }
    .screen {
      flex: 1;
      min-height: 0;
      display: flex;
      flex-direction: column;
      margin: 41px 40px 40px 35px;
      background: #565656;
      overflow: hidden;
    }
    .subtitle {
      flex: none;
      height: 119px;
      margin: 0;
      padding: 0 0 0 146px;
      border-top: 2px solid #2b2f2c;
      background: #fbd35f;
      color: #fff;
      font: 400 53px/60px "Noto Sans CJK SC", sans-serif;
      white-space: nowrap;
      overflow: hidden;
      -webkit-text-stroke: 3px #a8976a;
      paint-order: stroke fill;
    }
    .caret { width: 9px; height: 5px; color: #f0f0f0; }
    .caret.s { width: 6px; height: 4px; }
    .i34 { width: 34px; height: 34px; }
    .i20 { width: 20px; height: 20px; }
    .i18 { width: 18px; height: 18px; }
    .i16 { width: 16px; height: 16px; }
    .i14 { width: 14px; height: 14px; }

    /* title bar */
    .titlebar {
      flex: none;
      display: grid;
      grid-template-columns: 284fr 183fr 17fr 450fr 14fr 183fr 255fr 157fr;
      height: 22px;
    }
    .titlebar > * { display: flex; align-items: center; min-width: 0; }
    .quick { background: #a2a2a2; justify-content: flex-end; gap: 8px; padding-right: 4px; }
    .space { background: linear-gradient(#6e6e6e, #585858); padding: 0 4px; gap: 6px; }
    .space select { flex: 1; appearance: none; color: #7c7c7c; }
    .mid { background: #a2a2a2; justify-content: center; }
    .caption { background: #fff; color: #444; justify-content: center; gap: 12px; margin: 0; font: 400 13px/20px "Open Sans", sans-serif; }
    .search { background: #6f6f6f; padding-left: 4px; }
    .search input { width: 100%; font-style: italic; }
    .search input::placeholder { color: #c4c4c4; opacity: 1; }
    .account { background: #a2a2a2; gap: 8px; padding: 0 4px 0 2px; color: #f1f1f1; font-size: 13px; }
    .account .num { flex: 1; }
    .winbtns { background: #fff; justify-content: flex-end; gap: 29px; padding-right: 8px; }

    /* ribbon */
    .tabs { flex: none; display: flex; height: 21px; padding-left: 43px; background: #555; position: relative; }
    .app { position: absolute; left: 0; bottom: 0; width: 41px; height: 12px; background: #858585; }
    .tabs button { padding: 0 10px; color: #cfcfcf; white-space: nowrap; }
    .tabs .app { padding: 0; }
    .tabs .on { background: #696969; color: #fff; }
    .tabs .camb { display: flex; align-items: center; gap: 8px; margin-left: 14px; }
    .ribbon {
      flex: none;
      display: grid;
      grid-template-columns: 199fr 69fr 137fr 95fr 147fr 62fr 147fr 136fr 174fr 255fr 69fr 53fr;
      border-bottom: 1px solid #6b6b6b;
      background: #5b5b5b;
    }
    .panel { display: flex; flex-direction: column; min-width: 0; border-right: 1px solid #4d4d4d; overflow: hidden; }
    .panel:last-child { border-right: 0; }
    .body { height: 77px; padding-top: 3px; display: grid; grid-template-rows: repeat(3, 24px); align-items: center; justify-items: center; }
    .ptitle {
      display: flex; align-items: center; justify-content: center; gap: 7px;
      height: 19px; margin: 0; position: relative;
      background: linear-gradient(#4b4b4b, #454545);
      font-size: 12px; font-weight: 500; color: #ececec;
    }
    .corner { position: absolute; right: 4px; width: 6px; height: 6px; }
    .ib { display: flex; align-items: center; justify-content: center; }
    .rowb { display: flex; align-items: center; gap: 4px; justify-self: start; white-space: nowrap; font-weight: 500; }
    .rowb .caret { margin-left: 6px; }
    .big {
      grid-row: 1 / 4; align-self: start;
      display: flex; flex-direction: column; align-items: center;
      padding-top: 2px; height: 70px; white-space: nowrap; font-weight: 500;
    }
    .big svg + span { margin-top: 2px; }
    .combo {
      display: flex; align-items: center; gap: 3px;
      height: 22px; padding: 0 2px 0 4px;
      border: 1px solid #474747;
      background: linear-gradient(#6c6c6c, #555);
    }
    .combo select { flex: 1; appearance: none; font-weight: 500; }
    .model { grid-template-columns: 56px 50px 1fr; }
    .mesh { grid-template-columns: 42px 22px; }
    .solid { grid-template-columns: 26px 30px 1fr; }
    .draw { grid-template-columns: 28px 22px 32px 10px; }
    .modify { grid-template-columns: 26px 30px 22px 32px 18px 18px; }
    .sect { grid-template-columns: 1fr; }
    .coord { grid-template-columns: 26px 10px 36px 24px 24px 24px; }
    .coord .combo { grid-column: 3 / 7; width: 102px; justify-self: end; }
    .views { grid-template-columns: 1fr; padding-left: 2px; padding-right: 2px; }
    .views .combo { width: 100%; }
    .views .rowb { padding-left: 2px; }
    .select { grid-template-columns: 42px 70px 60px; }
    .cull { width: 38px; background: linear-gradient(#7c9fd0, #5478b0 60%, #476aa2); }
    .select .big:last-child { position: relative; }
    .select .big:last-child .caret { position: absolute; right: -4px; top: 53px; }
    .layers { grid-template-columns: 42px 24px 24px 26px 24px 1fr; padding-right: 2px; }
    .layers .combo { grid-column: 2 / 7; width: 100%; }
    .layers .rowb { padding-left: 2px; }
    .grp { grid-template-columns: 42px 26px; }
    .hot svg { width: 22px; height: 22px; }

    /* document tabs */
    .docs { flex: none; display: flex; align-items: flex-end; height: 27px; padding: 0 0 0 14px; background: #393939; border-bottom: 3px solid #5e5e5e; }
    .doc { height: 22px; display: flex; align-items: center; justify-content: space-between; clip-path: polygon(0 100%, 4px 90%, 11px 10%, 16px 0, calc(100% - 16px) 0, calc(100% - 11px) 10%, calc(100% - 4px) 90%, 100% 100%); }
    .doc.a { width: 136px; padding-left: 14px; margin-right: -17px; background: #515151; color: #bdbdbd; }
    .doc.b { width: 142px; padding: 0 20px; background: linear-gradient(#7a7a7a, #626262); color: #fff; font-weight: 600; }
    .doc.c { width: 26px; height: 18px; margin-bottom: 3px; justify-content: center; border-radius: 4px 10px; background: #555; clip-path: none; }
    .i8 { width: 8px; height: 8px; }
    .i10 { width: 10px; height: 10px; }

    /* drawing area */
    .canvas { position: relative; flex: 1; min-height: 0; overflow: hidden; background: #212a34; }
    .canvas > .art { position: absolute; inset: 0; width: 100%; height: 100%; }
    .vlabel { position: absolute; left: 1px; top: 4px; color: #e3e7ea; white-space: nowrap; }
    .dwin { position: absolute; right: 11px; top: 8px; display: flex; gap: 10px; }
    .vscroll { position: absolute; right: 0; top: 8px; width: 3px; height: 56px; background: #6c747a; }
    .cube { position: absolute; right: 17px; top: 35px; width: 116px; display: grid; grid-template-columns: 1fr 46px 1fr; align-items: center; row-gap: 17px; font: 500 16px/20px "Noto Sans CJK SC", sans-serif; color: #b2b8bc; text-align: center; }
    .cube .ringbg { position: absolute; left: 4px; top: 4px; width: 108px; height: 108px; border: 12px solid #454c57; border-radius: 50%; }
    .cube span, .cube button { position: relative; }
    .cube .n, .cube .s { grid-column: 1 / 4; }
    .cube .w { text-align: left; }
    .cube .e { text-align: right; }
    .cube .f { width: 46px; height: 43px; background: #b2b7b9; color: #5e6772; font-size: 24px; font-weight: 400; line-height: 34px; border: 3px solid #bfc3c3; }
    .wcs { position: absolute; right: 52px; top: 168px; width: 46px; height: 16px; border-radius: 4px; background: #9ba0a9; color: #6b717b; font: 700 10px/16px "Liberation Sans", sans-serif; text-align: left; padding-left: 4px; }
    .nav { position: absolute; right: 2px; top: 208px; width: 33px; height: 202px; border-radius: 4px; background: #5b6069; display: flex; flex-direction: column; align-items: center; padding: 15px 0 14px; justify-content: space-between; }
    .nav .caret { color: #3d444d; }
    .nav .i22 { width: 22px; height: 22px; }
    .tip { position: absolute; left: 406px; top: 322px; display: flex; align-items: center; justify-content: space-between; width: 351px; height: 21px; padding: 0 3px; background: #989898; border: 1px solid #b3b3b3; color: #333; white-space: nowrap; }
    .key { width: 10px; height: 10px; background: #eef; border: 1px solid #5557a0; }
    .key::after { content: ""; display: block; width: 4px; height: 4px; margin: 2px; background: #333a80; }
    .cmd { position: absolute; left: 310px; right: 0; bottom: 0; }
    .mono { font-family: "DejaVu Sans Mono", "Noto Sans CJK SC", monospace; }
    .hist { display: flex; flex-direction: column; align-items: flex-start; gap: 4px; margin: 0 0 2px 61px; }
    .hist p { margin: 0; padding: 0 2px 0 1px; height: 16px; background: #4c4f52; color: #a9adb0; font-size: 13px; white-space: pre; }
    .hist p:last-child { color: #e4e6e8; }
    .hist i { font-style: normal; font-size: 12px; }
    .cline { display: flex; height: 26px; background: #fff; color: #555; border-top: 1px solid #8a8a8a; }
    .chead { display: flex; align-items: center; gap: 8px; width: 55px; padding-left: 3px; background: linear-gradient(#767676, #585858); }
    .grip { width: 6px; height: 17px; background: repeating-linear-gradient(#8d8d8d 0 1px, #606060 1px 3px); }
    .cbody { flex: 1; display: flex; align-items: center; gap: 5px; padding-left: 24px; }
    .cbody b { color: #222; }
    .cbody .caret { color: #999; }
    .chip { background: #d4d4d4; padding: 1px; height: 17px; line-height: 15px; border-radius: 2px; white-space: nowrap; color: #666; }
    .chip em { font-style: normal; color: #5655dd; font-weight: 700; }
    .cbody input { flex: 1; }

    /* status bar */
    .status { flex: none; display: flex; height: 28px; background: #393939; }
    .lays { display: flex; width: 336px; padding: 2px 0 0 6px; align-items: flex-start; }
    .lays button { height: 18px; width: 58px; margin-right: -2px; background: #555; color: #b4b4b4; clip-path: polygon(0 0, 100% 0, calc(100% - 9px) 90%, calc(100% - 13px) 100%, 13px 100%, 9px 90%); }
    .lays .on { width: 50px; background: #757575; color: #fff; font-weight: 700; }
    .lays .add { width: 26px; display: flex; align-items: center; justify-content: center; clip-path: none; border-radius: 10px 3px; margin-left: 2px; }
    .sbar { flex: 1; min-width: 0; display: flex; align-items: center; background: #505050; border: 1px solid #777; border-right: 0; overflow: hidden; white-space: nowrap; }
    .sbar output { width: 184px; padding-left: 27px; font-size: 11px; color: #b2b2b2; border-right: 1px solid #6c6c6c; height: 100%; line-height: 26px; }
    .sbar .md { width: 31px; font-weight: 700; color: #f2f2f2; }
    .sb { display: flex; align-items: center; justify-content: center; width: 24px; height: 24px; }
    .sb.on { background: #5790c6; }
    .sb.n { width: 16px; }
    .sb.w { width: 26px; }
    .sep { width: 1px; height: 24px; background: #6c6c6c; }
    .scale { margin-left: 6px; font-size: 11px; font-weight: 600; color: #e6e6e6; }
    .taskbar { flex: none; display: flex; height: 32px; background: linear-gradient(90deg, #20241f, #1e2623 44%, #0c0c09 51%, #0a0a07 56%, #28281e 66%, #2a2b1f); }
    .taskbar button { width: 50px; display: flex; align-items: center; justify-content: center; padding: 6px 0 0; }
    .taskbar button:first-child { width: 44px; }
    .taskbar .tb { align-items: flex-end; }
    .taskbar .cur { background: #454a47; }
    .i24 { width: 24px; height: 24px; }

    /* channel mark, laid over the corner of the frame */
    .brand {
      position: absolute; left: 76px; top: 60px;
      display: flex; align-items: flex-start;
      color: #fff; white-space: nowrap;
      font: italic 700 49px/72px "Noto Sans CJK SC", sans-serif;
      -webkit-text-stroke: 7px #1c1c1c; paint-order: stroke fill;
    }
    .brand .lat { font: italic 600 51px/84px Lato, sans-serif; }
    .brand svg { width: 30px; height: 56px; margin: 12px -2px 0; }

    /* sponsor card */
    .sponsor { position: absolute; right: 10px; bottom: 0; width: 542px; height: 271px; display: flex; align-items: center; padding-left: 48px; background: #fdfdfd; color: #050505; white-space: nowrap; }
    .sponsor svg { width: 146px; height: 122px; }
    .sponsor div { display: flex; flex-direction: column; margin-top: 7px; }
    .sponsor strong { font: italic 900 59px/54px "Noto Sans CJK SC", sans-serif; }
    .sponsor a { color: inherit; text-decoration: none; font: italic 500 39px/38px "Noto Sans", sans-serif; }
  `;

  private tabs = ["实体", "曲面", "网格", "可视化", "参数化", "插入", "注释", "视图", "管理", "输出", "附加模块", "协作", "精选应用"];

  private titlebar() {
    return html`<header class="titlebar">
      <div class="quick">
        ${icon("folder", "i16")}${icon("phone", "i16")}${icon("printer", "i18")}${icon("undo", "i16")}${caret("s")}${icon("redo", "i16")}${caret("s")}
      </div>
      <label class="space">${icon("gear", "i16")}<select aria-label="工作空间"><option>三维建模</option></select>${caret()}</label>
      <button class="mid" aria-label="自定义">${caret()}</button>
      <h1 class="caption"><span>Autodesk AutoCAD 2019</span><span>Drawing1.dwg</span></h1>
      <button class="mid" aria-label="展开"><svg class="i8" viewBox="0 0 8 8"><path d="M2 0l4 4-4 4z" fill="#f4f4f4" /></svg></button>
      <div class="search"><input aria-label="搜索" placeholder="键入关键字或短语" /></div>
      <div class="account">
        ${icon("binoc", "i16")}${icon("user", "i16")}<span class="num">251152669</span>${caret("s")}${icon("cart", "i18")}${icon("share", "i16")}${caret("s")}
        ${icon("help", "i18")}${caret("s")}
      </div>
      <div class="winbtns">${ib("winMin", "最小化")}${ib("winMax", "还原")}${ib("winX", "关闭")}</div>
    </header>`;
  }

  private ribbon() {
    return html`<nav class="tabs">
        <button class="app" aria-label="应用程序菜单"></button>
        <button class="on">常用</button>
        ${this.tabs.map((t) => html`<button>${t}</button>`)}
        <button class="camb" aria-label="显示">${icon("cam", "i14")}${caret("s")}</button>
      </nav>
      <div class="ribbon">
        ${panel("model", "建模", html`${big("box", ["长方体"], true)}${big("extrude", ["拉伸"], true)}${row("polysolid", "多段体")}${row("press", "按住并拖动")}`)}
        ${panel("mesh", "网格", html`${big("sphere", ["平滑", "对象"])}${ib("ballPlus", "提高平滑度")}${ib("ballMinus", "降低平滑度")}${ib("ballLine", "优化网格")}`, false, true)}
        ${panel("solid", "实体编辑", html`${ib("union", "并集")}${ib("subtract", "差集")}${row("wire", "提取边", true)}
          ${ib("interfere", "干涉")}${ib("slab", "剖切")}${row("face", "拉伸面", true)}
          ${ib("intersect", "交集")}${ib("fillet3", "圆角边")}${row("split", "分割", true)}`)}
        ${panel("draw", "绘图", html`${ib("pline", "多段线")}${ib("plane", "平面曲面")}${ib("arc", "圆弧")}${more("更多圆弧")}
          ${ib("spline", "样条曲线")}${ib("line", "直线")}${ib("circle", "圆")}${more("更多圆")}
          ${ib("polygon", "多边形")}${ib("rect", "矩形")}${ib("ellipse", "椭圆")}${more("更多椭圆")}`)}
        ${panel("modify", "修改", html`${ib("mirror", "三维镜像")}${ib("gizmoRot", "三维移动")}${ib("move", "移动")}${ib("copy", "复制")}${ib("trim", "修剪")}${more("更多修剪")}
          ${ib("align", "三维对齐")}${ib("rot3", "三维旋转")}${ib("rotate", "旋转")}${ib("stretch", "拉伸")}${ib("fillet", "圆角")}${more("更多圆角")}
          ${ib("erase", "删除")}${ib("scale3", "三维缩放")}${ib("scale", "缩放")}${ib("offset", "偏移")}${ib("array", "阵列")}${more("更多阵列")}`)}
        ${panel("sect", "截面", big("section", ["截面", "平面"]), true, true)}
        ${panel("coord", "坐标", html`${ib("ucsBulb", "显示 UCS")}${more("UCS 选项")}${ib("ucsDoc", "UCS")}${ib("ucsDot", "原点")}${ib("ucsView", "视图")}${ib("ucsGlobe", "世界")}
          ${ib("ucsGear", "UCS 特性")}${more("更多特性")}${ib("ucsBack", "上一个")}${ib("ucsDot", "对象")}${ib("ucsZ", "Z 轴")}${ib("ucs3", "三点")}
          ${ib("ucsHash", "面")}${more("更多面")}${combo("ucsGlobe", "坐标系", "世界")}`, false, true)}
        ${panel("views", "视图", html`${combo("visWire", "视觉样式", "二维线框")}${combo("viewF", "视图", "未保存的视图")}${row("viewport", "单个视口", true)}`)}
        ${panel("select", "选择", html`${big("cull", ["剔除"], false, "cull")}${big("filter", ["无过滤器"], true)}${big("gizmo", ["移动", "小控件"], true)}`, false)}
        ${panel("layers", "图层", html`${big("layerProps", ["图层", "特性"])}
          <label class="combo">${icon("bulb", "i16")}${icon("sun", "i16")}${icon("unlock", "i16")}${icon("swatch", "i16")}<select aria-label="图层"><option>0</option></select>${caret()}</label>
          ${ib("lyBulb", "关")}${ib("lyBlue", "隔离")}${ib("lyFreeze", "冻结")}${ib("lyLock", "锁定")}${row("lyCur", "置为当前")}
          ${ib("lyOn", "打开")}${ib("lyBlue", "取消隔离")}${ib("lySun", "解冻")}${ib("lyUnlock", "解锁")}${row("lyMatch", "匹配图层")}`)}
        ${panel("grp", "组", html`${big("group", ["组"])}${ib("ungroup", "解除编组")}${ib("groupEdit", "组编辑")}${ib("groupSel", "组选择", "hot")}`)}
        ${panel("sect", "视图", big("base", ["基点"], true))}
      </div>
      <div class="docs">
        <button class="doc a">开始</button>
        <button class="doc b"><span>Drawing1*</span>${icon("xs", "i8")}</button>
        <button class="doc c" aria-label="新图形">${icon("plus", "i10")}</button>
      </div>`;
  }

  private canvas() {
    const chip = (t: string, k: string) => html`<button class="chip mono">${t}(<em>${k}</em>)</button>`;
    const hist = html`<p class="mono">选择要延伸的对象，或按住<i> Shift </i>键选择要修剪的对象，或</p>`;
    return html`<main class="canvas">
      <svg class="art" aria-hidden="true">
        <defs>
          <pattern id="g" width="62" height="60" patternUnits="userSpaceOnUse" x="50" y="50">
            <path d="M12.500 0v60M25.500 0v60M37.500 0v60M50.500 0v60M0 12.500h62M0 24.500h62M0 36.500h62M0 48.500h62" stroke="#242e39" />
            <path d="M.5 0v60M0 .5h62" stroke="#2d3845" />
          </pattern>
        </defs>
        <rect width="100%" height="100%" fill="url(#g)" />
        <g fill="none" stroke="#9aa4ae" stroke-width="2">
          <path d="M611 10V582M0 308L611 306" />
          <path d="M360 432V575" />
          <path d="M0 325L51 583" />
          <circle cx="55" cy="544" r="80" />
        </g>
        <rect x="391" y="307" width="4" height="4" fill="#212a34" stroke="#cfd5da" />
        <g fill="none" stroke="#aeb4ba" stroke-width="1.500">
          <path d="M12 544v48h50M7 587h10v10H7z" />
          <path d="M14 529l5 6 6-6M19 535v6M67 580l12 12M79 580l-12 12" />
        </g>
      </svg>
      <span class="vlabel">[−][俯视][二维线框]</span>
      <div class="dwin">
        <button class="ib" aria-label="最小化视口">${icon("dMin", "i10")}</button>
        <button class="ib" aria-label="还原视口">${icon("dMax", "i10")}</button>
        <button class="ib" aria-label="关闭视口">${icon("dX", "i10")}</button>
      </div>
      <div class="vscroll"></div>
      <div class="cube">
        <div class="ringbg"></div>
        <span class="n">北</span>
        <span class="w">西</span><button class="f">上</button><span class="e">东</span>
        <span class="s">南</span>
      </div>
      <button class="wcs">WCS</button>
      <div class="nav">
        ${icon("wheel", "i22")}${caret("s")}${icon("hand", "i22")}${icon("zoomx", "i22")}${caret("s")}${icon("orbit", "i22")}${caret("s")}${icon("motion", "i22")}
      </div>
      <div class="tip"><span>选择要延伸的对象，或按住 Shift 键选择要修剪的对象，或</span><span class="key"></span></div>
      <div class="cmd">
        <div class="hist">
          ${hist}
          <p class="mono"><i>[</i>栏选<i>(F)/</i>窗交<i>(C)/</i>投影<i>(P)/</i>边<i>(E)/</i>放弃<i>(U)]:</i></p>
          ${hist}
        </div>
        <div class="cline">
          <div class="chead"><span class="grip"></span>
            <button class="ib" aria-label="关闭命令行">${icon("x", "i10")}</button>
            <button class="ib" aria-label="自定义命令行">${icon("wrench", "i14")}</button>
          </div>
          <div class="cbody mono">
            ${caret("s")}<b>EXTEND</b><span>[</span>${chip("栏选", "F")}${chip("窗交", "C")}${chip("投影", "P")}${chip("边", "E")}${chip("放弃", "U")}<span>]:</span>
            <input aria-label="命令" />
          </div>
        </div>
      </div>
    </main>`;
  }

  private status() {
    const s = (name: string, label: string, cls = "") => html`<button class="sb ${cls}" aria-label=${label}>${icon(name, "i18")}</button>`;
    const d = () => html`<button class="sb n" aria-label="选项">${caret()}</button>`;
    const sep = html`<span class="sep"></span>`;
    return html`<footer class="status">
        <div class="lays">
          <button class="on">模型</button><button>布局1</button><button>布局2</button>
          <button class="add" aria-label="新建布局">${icon("plus", "i10")}</button>
        </div>
        <div class="sbar">
          <output>1881.7417, 1421.1952, 0.0000</output>
          <button class="md">模型</button>
          ${s("grid", "栅格", "on")}${s("dots", "捕捉")}${d()}${sep}${s("snap", "推断约束", "w")}${s("dyn", "动态输入", "on")}${s("ortho", "正交", "w")}${s("polar", "极轴")}${d()}
          ${s("iso", "等轴测")}${d()}${s("track", "对象追踪", "on")}${s("osnap", "对象捕捉", "on")}${d()}${sep}${s("lw", "线宽")}${s("trans", "透明度", "on")}
          ${s("cycle", "选择循环", "w")}${s("osnap3", "三维捕捉")}${d()}${s("ducs", "动态 UCS", "on")}${s("selfil", "选择过滤", "w")}${d()}${s("gizS", "小控件", "on")}${d()}
          ${s("annoA", "注释可见性", "on")}${s("annoB", "自动缩放", "w")}${s("annoC", "注释比例")}
          <span class="scale">1:1 / 100</span>
        </div>
      </footer>
      <div class="taskbar">
        <button aria-label="开始">${icon("win", "i18")}</button>
        <button aria-label="Cortana">${icon("ring", "i18")}</button>
        <button aria-label="任务视图">${icon("task", "i18")}</button>
        <button class="tb" aria-label="浏览器">${icon("bird", "i24")}</button>
        <button class="tb cur" aria-label="AutoCAD">${icon("acad", "i24")}</button>
      </div>`;
  }

  render() {
    return html`<div class="stage">
      <div class="card">
        <div class="screen">${this.titlebar()}${this.ribbon()}${this.canvas()}${this.status()}</div>
        <p class="subtitle">之后刚刚点击的线会自动延伸到你点击的第一条</p>
      </div>
      <div class="brand">
        <span>秒</span><span class="lat">d</span>
        <svg viewBox="0 0 28 52" aria-hidden="true">
          <circle cx="14" cy="34" r="14" fill="#1c1c1c" />
          <path d="M8 5l5 6 8-8" fill="none" stroke="#1c1c1c" stroke-width="9" />
          <circle cx="14" cy="34" r="12" fill="#1f86f2" />
          <path d="M10 27l12 7-12 8z" fill="#fff" />
          <path d="M8 5l5 6 8-8" fill="none" stroke="#ffe01f" stroke-width="4" />
        </svg>
        <span class="lat">ng</span><span>视频</span>
      </div>
      <aside class="sponsor">
        <svg viewBox="0 0 146 130" preserveAspectRatio="none" aria-hidden="true">
          <defs>
            <linearGradient id="b" x1="0" y1="0" x2="0" y2="1"><stop offset="0" stop-color="#12398c" /><stop offset="1" stop-color="#4a7cb9" /></linearGradient>
          </defs>
          <path d="M11 57C28 22 68 2 100 4c36 3 47 26 38 53 0-24-11-40-42-42C63 13 34 28 11 57z" fill="#98c32c" />
          <path d="M5 68C-6 104 17 127 54 126c40-2 80-30 89-71-16 34-50 56-86 57C25 113 4 99 5 68z" fill="#123b8d" />
          <path d="M11 79l21-13v34h-9z" fill="#123b8d" />
          <path d="M43 35l26-14v82H43z" fill="url(#b)" />
          <path d="M73 24l24 13v10L82 57v42l-9 4z" fill="#dcdcde" />
          <path d="M84 61l21-12v39l-21 9z" fill="#123b8d" />
          <path d="M109 53l18 9c-4 9-9 15-18 22z" fill="#dcdcde" />
        </svg>
        <div><strong>土木工程网</strong><a href="#">www.civilcn.com</a></div>
      </aside>
    </div>`;
  }
}
